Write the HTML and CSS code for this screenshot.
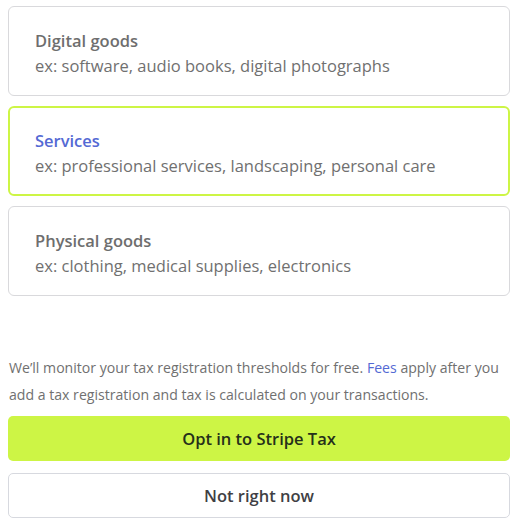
FILE: index.html
```html
<!DOCTYPE html>
<html lang="en">
<head>
<meta charset="utf-8">
<link rel="stylesheet" href="styles.css">
</head>
<body>
<div class="page">
  <div class="options">
    <div class="option">
      <div class="option-title">Digital goods</div>
      <div class="option-desc">ex: software, audio books, digital photographs</div>
    </div>
    <div class="option selected">
      <div class="option-title">Services</div>
      <div class="option-desc">ex: professional services, landscaping, personal care</div>
    </div>
    <div class="option">
      <div class="option-title">Physical goods</div>
      <div class="option-desc">ex: clothing, medical supplies, electronics</div>
    </div>
  </div>
  <p class="note"><span class="note-line">We’ll monitor your tax registration thresholds for free. <a class="link" href="#">Fees</a> apply after you</span> <span class="note-line">add a tax registration and tax is calculated on your transactions.</span></p>
  <div class="actions">
    <button class="btn btn-primary">Opt in to Stripe Tax</button>
    <button class="btn btn-secondary">Not right now</button>
  </div>
</div>
</body>
</html>
```

FILE: styles.css
```css
html, body {
  margin: 0;
  padding: 0;
  background: #ffffff;
}
body {
  font-family: "Open Sans", "Noto Sans", sans-serif;
  color: #6e6e6e;
}
.page {
  padding: 6px 12px 0 8px;
  display: flex;
  flex-direction: column;
}
.options {
  display: flex;
  flex-direction: column;
  gap: 10px;
}
.option {
  border: 1px solid #d9d9dc;
  border-radius: 6px;
  height: 90px;
  box-sizing: border-box;
  padding: 21px 0 0 26px;
  display: flex;
  flex-direction: column;
}
.option.selected {
  border: 2px solid #cdf545;
  padding: 20px 0 0 25px;
}
.option-title {
  font-size: 16.5px;
  font-weight: 600;
  color: #6e6e6e;
  line-height: 25px;
}
.option.selected .option-title {
  color: #5469d4;
}
.option-desc {
  font-size: 16.5px;
  line-height: 25px;
  color: #707070;
}
.note {
  margin: 58px 0 0 1px;
  font-size: 14.1px;
  line-height: 27px;
  color: #707070;
}
.note-line {
  display: block;
  white-space: nowrap;
}
.link {
  color: #5469d4;
  text-decoration: none;
}
.actions {
  display: flex;
  flex-direction: column;
  gap: 12px;
  margin-top: 8px;
}
.btn {
  font-family: inherit;
  font-size: 16.5px;
  font-weight: 600;
  height: 45px;
  border-radius: 5px;
  cursor: pointer;
}
.btn-primary {
  background: #cdf545;
  border: none;
  color: #25301a;
}
.btn-secondary {
  background: #ffffff;
  border: 1px solid #d7d9df;
  color: #3f3f44;
  height: 45px;
}
```
